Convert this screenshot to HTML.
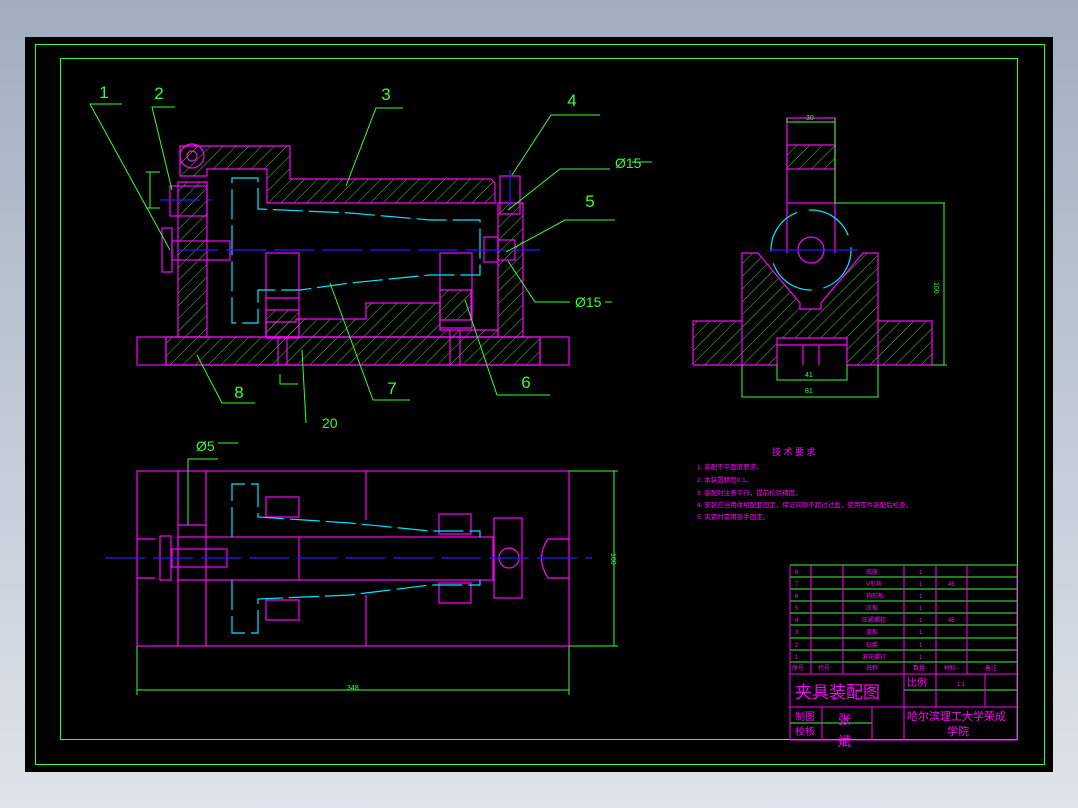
<!DOCTYPE html>
<html><head><meta charset="utf-8"><style>
html,body{margin:0;padding:0;width:1078px;height:808px;overflow:hidden;background:linear-gradient(#a1aec0,#dfe3ea);}
svg{position:absolute;left:0;top:0}
text{font-family:"Liberation Sans","Noto Sans CJK SC",sans-serif}
</style></head><body>
<svg width="1078" height="808" viewBox="0 0 1078 808">
<defs>
<pattern id="h" width="9" height="9" patternUnits="userSpaceOnUse" patternTransform="rotate(45)">
<line x1="0" y1="0" x2="0" y2="9" stroke="#3fd81f" stroke-width="1"/></pattern>
</defs>
<rect x="25" y="37" width="1028" height="735" fill="#000"/>
<g fill="none" stroke="#33ff33" stroke-width="1">
<rect x="35.5" y="44.5" width="1009" height="720"/>
<rect x="60.5" y="58.5" width="957" height="681"/>
</g>

<!-- FRONT VIEW -->
<g stroke="#ff00ff" stroke-width="1.2" fill="url(#h)">
<path d="M180 176 V146 L290 146 V179 L491 179 L495 183 V203 L267 203 V169 L207 169 V176 Z"/>
<path d="M178 182 H207 V337 H178 Z"/>
<path d="M498 203 H523 V337 H498 Z"/>
<path d="M266 337 V322 H296 V319 H366 V303 H440 V330 H498 V337 Z"/>
<path d="M166 337 V365 H540 V337 Z"/>
<path d="M266 310 H299 V337 H266 Z"/>
<path d="M440 290 H471 V320 H440 Z"/>
</g>
<g stroke="#ff00ff" stroke-width="1.2" fill="none">
<rect x="137" y="337" width="432" height="28"/>
<line x1="166" y1="337" x2="166" y2="365"/><line x1="540" y1="337" x2="540" y2="365"/>
<circle cx="192" cy="156" r="12"/><circle cx="192" cy="156" r="5"/>
<rect x="266" y="253" width="33" height="85"/>
<line x1="266" y1="298" x2="299" y2="298"/>
<rect x="440" y="253" width="32" height="75"/>
<rect x="170" y="186" width="37" height="30"/>
<rect x="172" y="241" width="58" height="19"/>
<rect x="162" y="228" width="10" height="44"/>
<rect x="500" y="176" width="20" height="38"/>
<rect x="484" y="237" width="14" height="25"/>
<rect x="498" y="240" width="17" height="20"/>
<line x1="450" y1="330" x2="450" y2="365"/><line x1="460" y1="330" x2="460" y2="365"/>
<line x1="278" y1="338" x2="278" y2="365"/><line x1="287" y1="338" x2="287" y2="365"/>
</g>
<g stroke="#00e5ff" stroke-width="1.2" fill="none" stroke-dasharray="30 6">
<path d="M232 178 H258 V209 L350 213 L430 220 H480 V275 H430 L350 283 L300 290 H258 V323 H232 Z"/>
</g>
<g stroke="#2a1bff" stroke-width="1.2" stroke-dasharray="40 8">
<line x1="178" y1="250" x2="540" y2="250"/>
<line x1="160" y1="200" x2="212" y2="200"/>
<line x1="510" y1="170" x2="510" y2="215"/>
</g>
<g stroke="#33ff33" stroke-width="1" fill="none">
<path d="M122 104 H90 L170 250"/>
<path d="M175 107 H152 L172 190"/>
<path d="M403 108 H376 L346 186"/>
<path d="M600 115 H551 L512 175"/>
<path d="M610 169 H560 L508 210"/>
<path d="M615 220 H565 L506 252"/>
<path d="M570 302 H535 L508 261"/>
<path d="M550 395 H497 L465 300"/>
<path d="M410 400 H373 L330 283"/>
<path d="M255 403 H222 L197 355"/>
<path d="M306 423 L302 350"/>
<path d="M280 374 V384 H298"/>
<path d="M150 172 V208 M146 172 H160 M146 208 H160"/>
<path d="M632 162 H652 M605 302 H612"/>
</g>
<g fill="#33ff33" font-size="17" text-anchor="middle">
<text x="104" y="98">1</text><text x="159" y="99">2</text><text x="386" y="100">3</text>
<text x="572" y="106">4</text><text x="590" y="207">5</text><text x="526" y="388">6</text>
<text x="392" y="394">7</text><text x="239" y="398">8</text>
</g>
<g fill="#33ff33" font-size="14">
<text x="615" y="168">Ø15</text><text x="575" y="307">Ø15</text><text x="322" y="428">20</text>
<text x="196" y="451">Ø5</text>
</g>

<!-- SIDE VIEW -->
<g stroke="#ff00ff" stroke-width="1.2">
<path fill="url(#h)" d="M742 253 H758 L800 303 V309 H821 V303 L863 253 H878 V321 H932 V365 H847 V338 H777 V365 H693 V321 H742 Z"/>
<rect fill="url(#h)" x="787" y="145" width="48" height="24"/>
<rect fill="none" x="787" y="118" width="48" height="85"/>
<line x1="787" y1="203" x2="787" y2="253"/><line x1="835" y1="203" x2="835" y2="253"/>
<circle fill="none" cx="811" cy="250" r="13"/>
<line x1="742" y1="321" x2="742" y2="365"/><line x1="878" y1="321" x2="878" y2="365"/>
<line x1="777" y1="345" x2="847" y2="345"/>
<line x1="803" y1="345" x2="803" y2="365"/><line x1="819" y1="345" x2="819" y2="365"/>
</g>
<circle cx="811" cy="250" r="40" fill="none" stroke="#00e5ff" stroke-width="1.2" stroke-dasharray="50 12"/>
<line x1="770" y1="250" x2="858" y2="250" stroke="#2a1bff" stroke-width="1.2"/>
<g stroke="#33ff33" fill="none">
<path d="M787 118 V122 H835 M835 118 V203 H945 M944 203 V365 M932 365 H947 M777 365 V380 H847 V365 M742 365 V397 H878 V365"/>
</g>
<g fill="#33ff33" font-size="7"><text x="806" y="120">30</text><text x="805" y="377">41</text><text x="805" y="393">81</text><text x="933" y="287" transform="rotate(90 936 285)">100</text></g>

<!-- TOP VIEW -->
<g stroke="#ff00ff" stroke-width="1.2" fill="none">
<rect x="137" y="471" width="432" height="175"/>
<line x1="178" y1="471" x2="178" y2="646"/><line x1="206" y1="471" x2="206" y2="646"/>
<line x1="366" y1="471" x2="366" y2="520"/><line x1="366" y1="595" x2="366" y2="646"/>
<rect x="178" y="537" width="315" height="43"/>
<line x1="299" y1="537" x2="299" y2="580"/>
<rect x="266" y="497" width="33" height="20"/><rect x="266" y="600" width="33" height="20"/>
<rect x="439" y="514" width="32" height="20"/><rect x="439" y="583" width="32" height="20"/>
<rect x="494" y="518" width="28" height="80"/>
<circle cx="509" cy="558" r="10"/>
<path d="M137 539 H155 M137 578 H155 M569 539 H548 Q535 558 548 578 H569"/>
<rect x="160" y="536" width="11" height="44"/>
<rect x="172" y="549" width="55" height="18"/>
<line x1="178" y1="525" x2="206" y2="525"/>
</g>
<g stroke="#00e5ff" stroke-width="1.2" fill="none" stroke-dasharray="30 6">
<path d="M232 537 V484 H258 V517 L350 523 L430 531 H480 V537"/>
<path d="M232 580 V633 H258 V599 L350 595 L430 585 H480 V580"/>
</g>
<line x1="105" y1="558" x2="592" y2="558" stroke="#2a1bff" stroke-width="1.2" stroke-dasharray="40 8"/>
<g stroke="#33ff33" fill="none">
<path d="M569 471 H618 M614 471 V646 M569 646 H618 M137 646 V695 M569 646 V695 M137 690 H569 M188 525 V459 H218 M218 443 H238"/>
</g>
<g fill="#33ff33" font-size="7"><text x="347" y="690">348</text><text x="605" y="555" transform="rotate(90 609 557)">100</text></g>

<!-- TECH REQ -->
<g fill="#ff00ff" font-size="6.5">
<text x="772" y="455" font-size="9">技 术 要 求</text>
<text x="697" y="469">1. 装配不平面度要求。</text>
<text x="697" y="482">2. 本装置精度0.1。</text>
<text x="697" y="495">3. 装配时注意平行，提前检验精度。</text>
<text x="697" y="507">4. 安装应当用体相配套固定，保证间隙不超过过盈，使用零件装配后检查。</text>
<text x="697" y="519">5. 夹紧时需用扳手固定。</text>
</g>

<!-- TITLE BLOCK -->
<g stroke="#33ff33" fill="none">
<path d="M790 565 H1017 M790 577 H1017 M790 589 H1017 M790 601 H1017 M790 613 H1017 M790 625 H1017 M790 638 H1017 M790 650 H1017 M790 662 H1017 M904 690 H1017 M790 723 H872"/>
</g>
<g stroke="#ff00ff" fill="none">
<path d="M790 565 V740 H1017 V565 M811 565 V674 M843 565 V674 M904 565 V740 M936 565 V674 M967 565 V674 M790 674 H1017 M790 707 H1017 M822 707 V740 M872 707 V740 M985 674 V707 M936 674 V707"/>
</g>
<g fill="#ff00ff" font-size="6">
<text x="795" y="574">8</text><text x="795" y="586">7</text><text x="795" y="598">6</text><text x="795" y="610">5</text><text x="795" y="622">4</text><text x="795" y="634">3</text><text x="795" y="647">2</text><text x="795" y="659">1</text>
<text x="866" y="574">底座</text><text x="866" y="586">V形块</text><text x="866" y="598">钩形板</text><text x="866" y="610">压板</text><text x="862" y="622">压紧螺栓</text><text x="866" y="634">盖板</text><text x="866" y="647">钻套</text><text x="862" y="659">滚花螺钉</text>
<text x="919" y="574">1</text><text x="919" y="586">1</text><text x="919" y="598">1</text><text x="919" y="610">1</text><text x="919" y="622">1</text><text x="919" y="634">1</text><text x="919" y="647">1</text><text x="919" y="659">1</text>
<text x="948" y="586">45</text><text x="948" y="622">45</text>
<text x="792" y="670">序号</text><text x="818" y="670">代号</text><text x="866" y="670">名称</text><text x="913" y="670">数量</text><text x="944" y="670">材料</text><text x="985" y="670">备注</text>
<text x="957" y="686">1:1</text>
</g>
<g fill="#ff00ff">
<text x="795" y="698" font-size="17">夹具装配图</text>
<text x="907" y="686" font-size="10">比例</text>
<text x="795" y="720" font-size="10">制图</text><text x="795" y="735" font-size="10">校核</text>
<text x="838" y="724" font-size="13">张</text><text x="838" y="746" font-size="13">斌</text>
<text x="907" y="720" font-size="11">哈尔滨理工大学荣成</text><text x="947" y="735" font-size="11">学院</text>
</g>
</svg>
</body></html>
